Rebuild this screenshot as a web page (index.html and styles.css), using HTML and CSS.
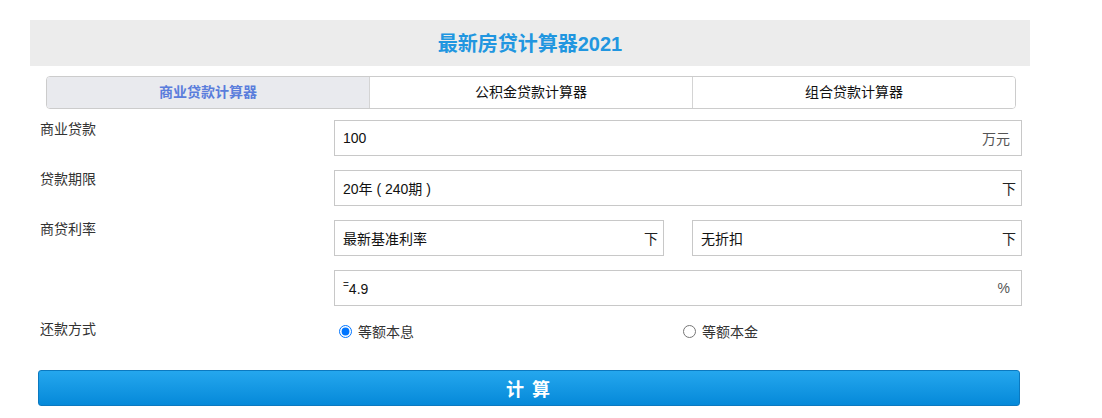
FILE: index.html
```html
<!DOCTYPE html>
<html lang="zh-CN">
<head>
  <meta charset="UTF-8">
  <title>最新房贷计算器2021</title>
  <link rel="stylesheet" href="styles.css">
</head>
<body>
  <div class="calc">
    <div class="calc-title">最新房贷计算器2021</div>
    <div class="tabs">
      <div class="tab active">商业贷款计算器</div>
      <div class="tab">公积金贷款计算器</div>
      <div class="tab">组合贷款计算器</div>
    </div>
    <form class="form">
      <div class="row">
        <div class="label">商业贷款</div>
        <div class="field">
          <div class="box"><span>100</span><span class="unit">万元</span></div>
        </div>
      </div>
      <div class="row">
        <div class="label">贷款期限</div>
        <div class="field">
          <div class="box"><span>20年 ( 240期 )</span><span class="arrow">下</span></div>
        </div>
      </div>
      <div class="row">
        <div class="label">商贷利率</div>
        <div class="field split">
          <div class="box"><span>最新基准利率</span><span class="arrow">下</span></div>
          <div class="box"><span>无折扣</span><span class="arrow">下</span></div>
        </div>
      </div>
      <div class="row">
        <div class="label"></div>
        <div class="field">
          <div class="box"><span><sup class="eq">=</sup>4.9</span><span class="unit">%</span></div>
        </div>
      </div>
      <div class="row radios-row">
        <div class="label">还款方式</div>
        <div class="field radios">
          <label class="radio"><input type="radio" name="way" checked> 等额本息</label>
          <label class="radio"><input type="radio" name="way"> 等额本金</label>
        </div>
      </div>
      <button type="button" class="btn">计 算</button>
    </form>
  </div>
</body>
</html>
```

FILE: styles.css
```css
body {
  margin: 0;
  padding: 20px 0 0 30px;
  font-family: "Liberation Sans", "Noto Sans CJK SC", sans-serif;
  font-size: 14px;
  color: #333;
  background: #fff;
}

.calc {
  width: 1000px;
}

.calc-title {
  height: 46px;
  line-height: 48px;
  background: #ececec;
  text-align: center;
  font-size: 20px;
  font-weight: bold;
  color: #2196e0;
}

.tabs {
  display: flex;
  margin: 10px 14px 0 16px;
  height: 31px;
  border: 1px solid #ccc;
  border-radius: 4px;
  overflow: hidden;
}

.tab {
  flex: 1;
  text-align: center;
  line-height: 31px;
  color: #111;
  background: #fff;
  border-left: 1px solid #d4d4d4;
}

.tab:first-child {
  border-left: none;
}

.tab.active {
  background: #e9eaee;
  color: #5a7ddc;
  font-weight: bold;
}

.form {
  padding-top: 11px;
}

.row {
  display: grid;
  grid-template-columns: 304px 688px;
  margin-bottom: 14px;
}

.label {
  padding: 0 0 0 10px;
  line-height: 18px;
  color: #333;
}

.field.split {
  display: flex;
  gap: 28px;
}

.box {
  flex: 1;
  height: 34px;
  border: 1px solid #c8c8c8;
  display: flex;
  align-items: center;
  justify-content: space-between;
  padding: 0 8px;
  color: #111;
}

.unit {
  color: #555;
  margin-right: 3px;
}

.arrow {
  color: #222;
  margin-right: -3px;
}

.eq {
  font-size: 10px;
  vertical-align: 6px;
  color: #333;
}

.radios-row {
  margin-bottom: 0;
}

.radios {
  display: flex;
  padding-top: 1px;
}

.radio {
  flex: 1;
  display: flex;
  align-items: center;
  gap: 6px;
  color: #333;
  padding-left: 5px;
}

.radio input {
  margin: 0;
  width: 13px;
  height: 13px;
}

.btn {
  display: block;
  margin: 29px 0 0 8px;
  width: 982px;
  height: 36px;
  border: 1px solid #0b79c0;
  border-radius: 3px;
  background: linear-gradient(#25a7ee, #0589d9);
  color: #fff;
  font-family: "Noto Sans CJK SC", sans-serif;
  font-size: 18px;
  font-weight: bold;
  letter-spacing: 2px;
  cursor: pointer;
}
```
